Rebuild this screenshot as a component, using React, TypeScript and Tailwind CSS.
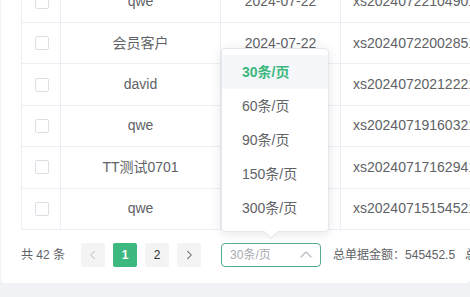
import React from 'react'

interface Row { name: string; date: string; no: string }

// dates of rows 3-6 sit under the open size menu, so they are left empty
const rows: Row[] = [
  { name: 'qwe', date: '2024-07-22', no: 'xs20240722104901' },
  { name: '会员客户', date: '2024-07-22', no: 'xs20240722002851' },
  { name: 'david', date: '', no: 'xs20240720212221' },
  { name: 'qwe', date: '', no: 'xs20240719160321' },
  { name: 'TT测试0701', date: '', no: 'xs20240717162941' },
  { name: 'qwe', date: '', no: 'xs20240715154521' },
]

const sizes = ['30条/页', '60条/页', '90条/页', '150条/页', '300条/页']

const font = { fontFamily: '"Liberation Sans", Arial, "Noto Sans CJK SC", sans-serif' }

function Chevron({ dir, color }: { dir: 'left' | 'right' | 'up'; color: string }) {
  const d = dir === 'left' ? 'M7 2 L3 6 L7 10' : dir === 'right' ? 'M4 2 L8 6 L4 10' : 'M1 8 L6 3 L11 8'
  return (
    <svg width={dir === 'up' ? 12 : 11} height="12" viewBox="0 0 12 12" fill="none" className="shrink-0">
      <path d={d} stroke={color} strokeWidth="1.1" strokeLinecap="round" strokeLinejoin="round" />
    </svg>
  )
}

export default function App() {
  return (
    <div className="relative w-[470px] h-[297px] overflow-hidden bg-[#f0f2f5] text-[#606266]" style={font}>
      <div className="ml-[1px] h-[283px] bg-white rounded-b pl-5 overflow-hidden">
        <div className="-mt-[18.4px]">
          {rows.map((r, i) => (
            <div key={i} className="grid grid-cols-[40px_160px_120px_1fr] h-[41.4px] box-border border-b border-[#ebeef5] text-[14px]">
              <div className="flex items-center justify-center border-l border-r border-[#ebeef5] pl-[2px]">
                <span className="w-[14px] h-[14px] rounded-[2px] border border-[#dcdfe6] bg-white" />
              </div>
              <div className="flex items-center justify-center border-r border-[#ebeef5]">{r.name}</div>
              <div className="flex items-center justify-center border-r border-[#ebeef5]">{r.date}</div>
              <div className="flex items-center pl-3 whitespace-nowrap overflow-hidden">{r.no}</div>
            </div>
          ))}
        </div>

        <div className="mt-[12.6px] flex items-center h-6 text-[12px] whitespace-nowrap">
          <span className="mr-4 shrink-0">共 42 条</span>
          <div className="flex gap-2 shrink-0">
            <button className="w-6 h-6 rounded-[2px] bg-[#f4f4f5] flex items-center justify-center">
              <Chevron dir="left" color="#c0c4cc" />
            </button>
            <button className="w-6 h-6 rounded-[2px] bg-[#3db87e] text-white font-bold flex items-center justify-center">1</button>
            <button className="w-6 h-6 rounded-[2px] bg-[#f4f4f5] text-[#303133] flex items-center justify-center">2</button>
            <button className="w-6 h-6 rounded-[2px] bg-[#f4f4f5] flex items-center justify-center">
              <Chevron dir="right" color="#606266" />
            </button>
          </div>
          <div className="ml-5 w-[100px] shrink-0 h-6 box-border rounded border border-[#55ad8b] flex items-center justify-between pl-2 pr-[8px]">
            <span className="text-[#a8abb2]">30条/页</span>
            <Chevron dir="up" color="#b4b7bd" />
          </div>
          <span className="ml-3 shrink-0">总单据金额：545452.5</span>
          <span className="ml-[10px] shrink-0">总数量：1280</span>
        </div>
      </div>

      <div className="absolute left-[221px] top-[48px] w-[108px] bg-white rounded border border-[#e4e7ed] shadow-[0_2px_12px_rgba(0,0,0,0.1)] py-[6px] text-[14px]">
        {sizes.map((s, i) => (
          <div
            key={s}
            className={i === 0
              ? 'h-[34px] flex items-center pl-5 bg-[#f5f7fa] text-[#3db87e] font-bold'
              : 'h-[34px] flex items-center pl-5 text-[#606266]'}
          >
            {s}
          </div>
        ))}
        <span className="absolute left-[44px] -bottom-[6px] w-[10px] h-[10px] rotate-45 bg-white border-r border-b border-[#e4e7ed]" />
      </div>
    </div>
  )
}
